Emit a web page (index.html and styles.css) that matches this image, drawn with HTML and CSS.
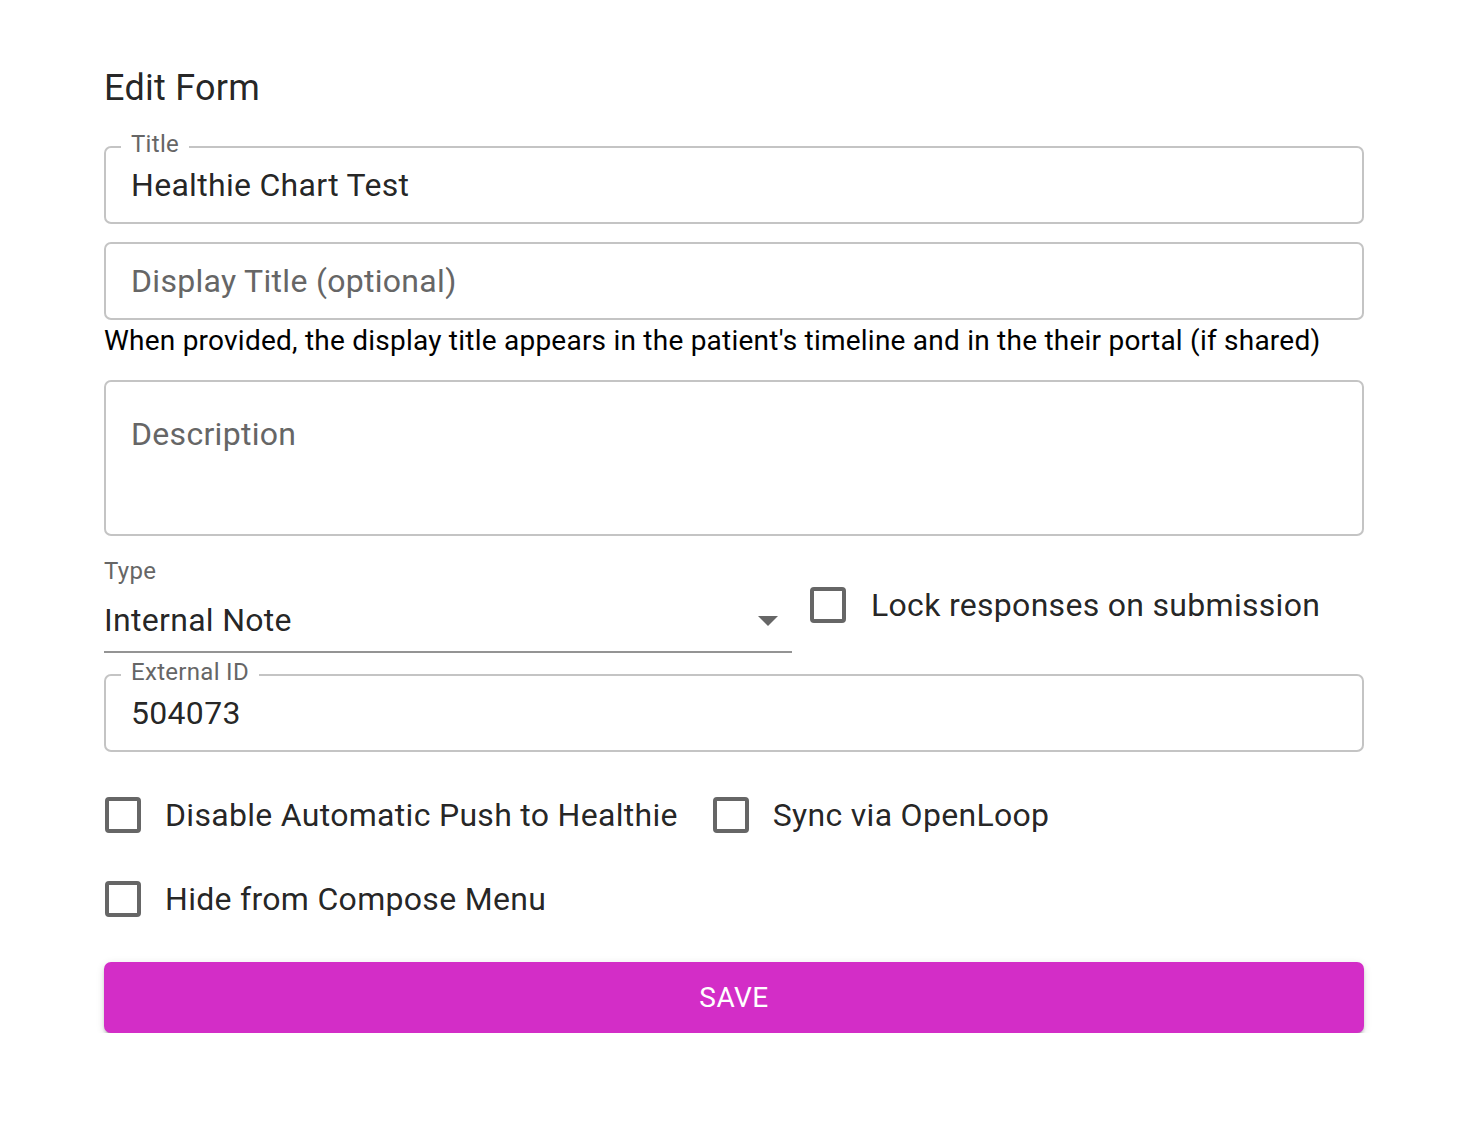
FILE: index.html
```html
<!DOCTYPE html>
<html lang="en">
<head>
    <meta charset="UTF-8">
    <meta name="viewport" content="width=device-width, initial-scale=1.0">
    <title>Edit Form</title>
    <link rel="stylesheet" href="styles.css">
</head>
<body>

    <div class="page">
        <h1 class="heading">Edit Form</h1>

        <div class="field field-title">
            <label class="notch" for="title">Title</label>
            <input class="outlined" type="text" id="title" value="Healthie Chart Test">
        </div>

        <div class="field field-display">
            <input class="outlined" type="text" id="displayTitle" placeholder="Display Title (optional)">
        </div>
        <div class="helper">When provided, the display title appears in the patient's timeline and in the their portal (if shared)</div>

        <div class="field field-description">
            <textarea class="outlined multiline" id="description" placeholder="Description"></textarea>
        </div>

        <div class="type-row">
            <div class="select-wrap">
                <div class="select-label">Type</div>
                <div class="select">
                    <span class="select-value">Internal Note</span>
                    <svg class="select-arrow" width="20" height="10" viewBox="0 0 20 10"><path d="M0 0h20L10 10z" fill="#666"/></svg>
                </div>
            </div>
            <label class="check check-lock">
                <span class="box"></span>
                <span class="check-text">Lock responses on submission</span>
            </label>
        </div>

        <div class="field field-external">
            <label class="notch" for="externalId">External ID</label>
            <input class="outlined" type="text" id="externalId" value="504073">
        </div>

        <div class="check-row">
            <label class="check">
                <span class="box"></span>
                <span class="check-text">Disable Automatic Push to Healthie</span>
            </label>
            <label class="check">
                <span class="box"></span>
                <span class="check-text">Sync via OpenLoop</span>
            </label>
        </div>

        <div class="check-row check-row-last">
            <label class="check">
                <span class="box"></span>
                <span class="check-text">Hide from Compose Menu</span>
            </label>
        </div>

        <button class="save">Save</button>
    </div>

</body>
</html>
```

FILE: styles.css
```css
body {
    margin: 0;
    font-family: Roboto, "Liberation Sans", sans-serif;
    color: rgba(0, 0, 0, 0.87);
    background: #fff;
}

.page {
    width: 1260px;
    padding: 67px 0 0 104px;
}

.heading {
    margin: 0;
    font-size: 36px;
    line-height: 42px;
    font-weight: 400;
    letter-spacing: 0.25px;
}

.field {
    position: relative;
}

.field-title {
    margin-top: 37px;
}

.field-display {
    margin-top: 18px;
}

.field-description {
    margin-top: 24px;
}

.field-external {
    margin-top: 21px;
}

.outlined {
    display: block;
    width: 100%;
    height: 78px;
    box-sizing: border-box;
    padding: 0 26px 0 25px;
    border: 2px solid #c4c4c4;
    border-radius: 7px;
    font-family: inherit;
    font-size: 32px;
    letter-spacing: 0.3px;
    color: rgba(0, 0, 0, 0.87);
    background: #fff;
    outline: none;
}

.outlined::placeholder {
    color: #666;
    opacity: 1;
}

.multiline {
    height: 156px;
    padding-top: 33px;
    line-height: 38px;
    resize: none;
}

.notch {
    position: absolute;
    top: -16px;
    left: 17px;
    padding: 0 10px;
    background: #fff;
    font-size: 24px;
    line-height: 28px;
    letter-spacing: 0.3px;
    color: #666;
}

.helper {
    margin-top: 6px;
    font-size: 28px;
    line-height: 30px;
    letter-spacing: 0.23px;
    color: #000;
}

.type-row {
    display: flex;
    align-items: center;
    margin-top: 21px;
}

.select-wrap {
    width: 688px;
    margin-right: 18px;
}

.select-label {
    font-size: 24px;
    line-height: 28px;
    letter-spacing: 0.3px;
    color: #666;
}

.select {
    display: flex;
    align-items: center;
    justify-content: space-between;
    margin-top: 16px;
    padding-bottom: 12px;
    border-bottom: 2px solid #949494;
}

.select-value {
    font-size: 32px;
    line-height: 38px;
    letter-spacing: 0.3px;
}

.select-arrow {
    margin: 2px 14px 0 0;
}

.check {
    display: flex;
    align-items: center;
    cursor: pointer;
}

.box {
    width: 36px;
    height: 36px;
    box-sizing: border-box;
    border: 4px solid #666;
    border-radius: 4px;
    margin-right: 25px;
}

.check-text {
    font-size: 32px;
    line-height: 38px;
    letter-spacing: 0.3px;
    color: rgba(0, 0, 0, 0.87);
}

.check-row {
    display: flex;
    gap: 35px;
    height: 48px;
    margin-top: 39px;
    padding-left: 1px;
}

.check-row .box {
    margin-right: 24px;
}

.check-row-last {
    margin-top: 36px;
}

.save {
    display: block;
    width: 100%;
    height: 71px;
    margin-top: 39px;
    border: none;
    border-radius: 7px;
    background-color: #d32dc7;
    color: #fff;
    font-family: inherit;
    font-size: 28px;
    letter-spacing: 0.5px;
    text-transform: uppercase;
    cursor: pointer;
    box-shadow: 0 5px 2px -3px rgba(0, 0, 0, 0.2), 0 3px 3px 0 rgba(0, 0, 0, 0.14), 0 2px 8px 0 rgba(0, 0, 0, 0.12);
}
```
